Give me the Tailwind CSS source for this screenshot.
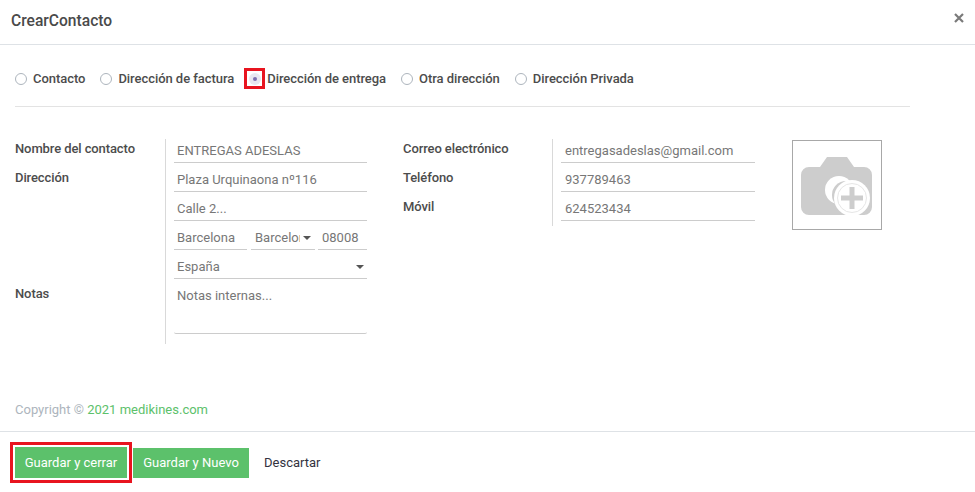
<!DOCTYPE html>
<html lang="es">
<head>
    <meta charset="UTF-8">
    <title>CrearContacto</title>
    <script src="https://cdn.jsdelivr.net/npm/@tailwindcss/browser@4"></script>
</head>
<body class="bg-white font-['Roboto',sans-serif] text-[13px] text-[#4c4c4c] h-[492px] w-[975px] overflow-hidden flex flex-col">
    <!-- cabecera -->
    <header class="h-[45px] shrink-0 border-b border-[#dee2e6] flex items-center justify-between pl-[11px] pr-[11px]">
        <h1 class="text-[15.600px] font-medium text-[#4a4a4a] pb-[1px]">CrearContacto</h1>
        <span class="text-[#7a7a7a] pb-[8px]">
            <svg width="10" height="10" viewBox="0 0 10 10" stroke="currentColor" stroke-width="2.2"><path d="M1 1l8 8M9 1l-8 8"/></svg>
        </span>
    </header>

    <main class="flex-1 px-[15px] flex flex-col">
        <!-- tipo de direccion -->
        <div class="h-[62px] border-b border-[#e3e3e3] w-[895px] flex items-center font-medium pt-[6px] tracking-[-0.05px]">
            <label class="flex items-center"><span class="w-[12px] h-[12px] rounded-full border border-[#adb5bd] mr-[6px]"></span>Contacto</label>
            <label class="flex items-center ml-[15px]"><span class="w-[12px] h-[12px] rounded-full border border-[#adb5bd] mr-[6px]"></span>Dirección de factura</label>
            <label class="flex items-center ml-[10px]">
                <span class="w-[21px] h-[21px] border-[3px] border-[#e8141f] mr-[2px] flex items-center justify-center">
                    <span class="w-[12px] h-[12px] rounded-full bg-[#e8e8f0] flex items-center justify-center"><span class="w-[4px] h-[4px] rounded-full bg-[#7c6fb0]"></span></span>
                </span>Dirección de entrega</label>
            <label class="flex items-center ml-[15px]"><span class="w-[12px] h-[12px] rounded-full border border-[#adb5bd] mr-[6px]"></span>Otra dirección</label>
            <label class="flex items-center ml-[15px]"><span class="w-[12px] h-[12px] rounded-full border border-[#adb5bd] mr-[6px]"></span>Dirección Privada</label>
        </div>

        <!-- formulario -->
        <div class="flex mt-[32px] items-start">
            <div class="flex w-[352px]">
                <div class="w-[151px] shrink-0 border-r border-[#d9d9d9] h-[205px] font-medium tracking-[-0.1px]">
                    <div class="h-[29px] leading-[19px]">Nombre del contacto</div>
                    <div class="h-[29px] leading-[19px]">Dirección</div>
                    <div class="h-[87px]"></div>
                    <div class="leading-[19px]">Notas</div>
                </div>
                <div class="ml-[8px] w-[193px] text-[#777]">
                    <div class="h-[24px] mb-[5px] border-b border-[#ccc] pl-[3px] leading-[24px]">ENTREGAS ADESLAS</div>
                    <div class="h-[24px] mb-[5px] border-b border-[#ccc] pl-[3px] leading-[24px]">Plaza Urquinaona nº116</div>
                    <div class="h-[24px] mb-[5px] border-b border-[#ccc] pl-[3px] leading-[24px]">Calle 2...</div>
                    <div class="flex h-[24px] mb-[5px]">
                        <div class="w-[73px] border-b border-[#ccc] pl-[3px] leading-[24px]">Barcelona</div>
                        <div class="w-[64px] ml-[4px] border-b border-[#ccc] pl-[4px] leading-[24px] flex items-center">
                            <span class="w-[45px] overflow-hidden whitespace-nowrap">Barcelona</span>
                            <span class="ml-[3px] w-0 h-0 border-x-[4px] border-x-transparent border-t-[4px] border-t-[#555]"></span>
                        </div>
                        <div class="w-[49px] ml-[3px] border-b border-[#ccc] pl-[4px] leading-[24px]">08008</div>
                    </div>
                    <div class="h-[24px] mb-[5px] border-b border-[#ccc] pl-[3px] leading-[24px] flex items-center justify-between pr-[3px]">
                        <span>España</span>
                        <span class="w-0 h-0 border-x-[4px] border-x-transparent border-t-[4px] border-t-[#555]"></span>
                    </div>
                    <div class="h-[50px] border-b border-[#ccc] pl-[3px] leading-[24px] rounded-b-[2px]">Notas internas...</div>
                </div>
            </div>

            <div class="flex w-[352px] ml-[36px]">
                <div class="w-[150px] shrink-0 border-r border-[#d9d9d9] h-[87px] font-medium tracking-[-0.1px]">
                    <div class="h-[29px] leading-[19px]">Correo electrónico</div>
                    <div class="h-[29px] leading-[19px]">Teléfono</div>
                    <div class="leading-[19px]">Móvil</div>
                </div>
                <div class="ml-[8px] w-[194px] text-[#777]">
                    <div class="h-[24px] mb-[5px] border-b border-[#ccc] pl-[4px] leading-[24px]">entregasadeslas@gmail.com</div>
                    <div class="h-[24px] mb-[5px] border-b border-[#ccc] pl-[4px] leading-[24px]">937789463</div>
                    <div class="h-[24px] border-b border-[#ccc] pl-[4px] leading-[24px]">624523434</div>
                </div>
            </div>

            <!-- foto -->
            <div class="w-[90px] h-[90px] ml-[37px] mt-[1px] border border-[#a8a8a8] flex items-center justify-center shrink-0">
                <svg class="mt-[4px]" width="72" height="60" viewBox="0 0 72 60">
                    <path fill="#cdcdcd" d="M8 10h11l7-10h20l7 10h10a8 8 0 0 1 8 8v32a8 8 0 0 1-8 8H8a8 8 0 0 1-8-8V18a8 8 0 0 1 8-8z"/>
                    <circle cx="38" cy="33" r="14" fill="#fff"/>
                    <circle cx="45" cy="38" r="14" fill="#cdcdcd"/>
                    <circle cx="51" cy="41" r="18" fill="#fff"/>
                    <circle cx="51" cy="41" r="14.500" fill="#fff" stroke="#e6e6e6" stroke-width="1"/>
                    <path fill="#cdcdcd" d="M48.500 30h5v8.500H62v5h-8.500V52h-5v-8.500H40v-5h8.500z"/>
                </svg>
            </div>
        </div>

        <div class="mt-auto pb-[12px] text-[#adb5bd]">Copyright © <span class="text-[#5cc16b]">2021 medikines.com</span></div>
    </main>

    <!-- pie -->
    <footer class="h-[61px] shrink-0 border-t border-[#dee2e6] flex items-center pl-[10px] pt-[1px]">
        <div class="border-[3px] border-[#e8141f] p-[2px] w-[122px] h-[41px] flex">
            <button class="w-full h-full bg-[#5cc16b] text-white">Guardar y cerrar</button>
        </div>
        <button class="w-[116px] h-[30px] ml-[1px] bg-[#5cc16b] text-white">Guardar y Nuevo</button>
        <button class="ml-[15px] text-[#333340]">Descartar</button>
    </footer>
</body>
</html>
